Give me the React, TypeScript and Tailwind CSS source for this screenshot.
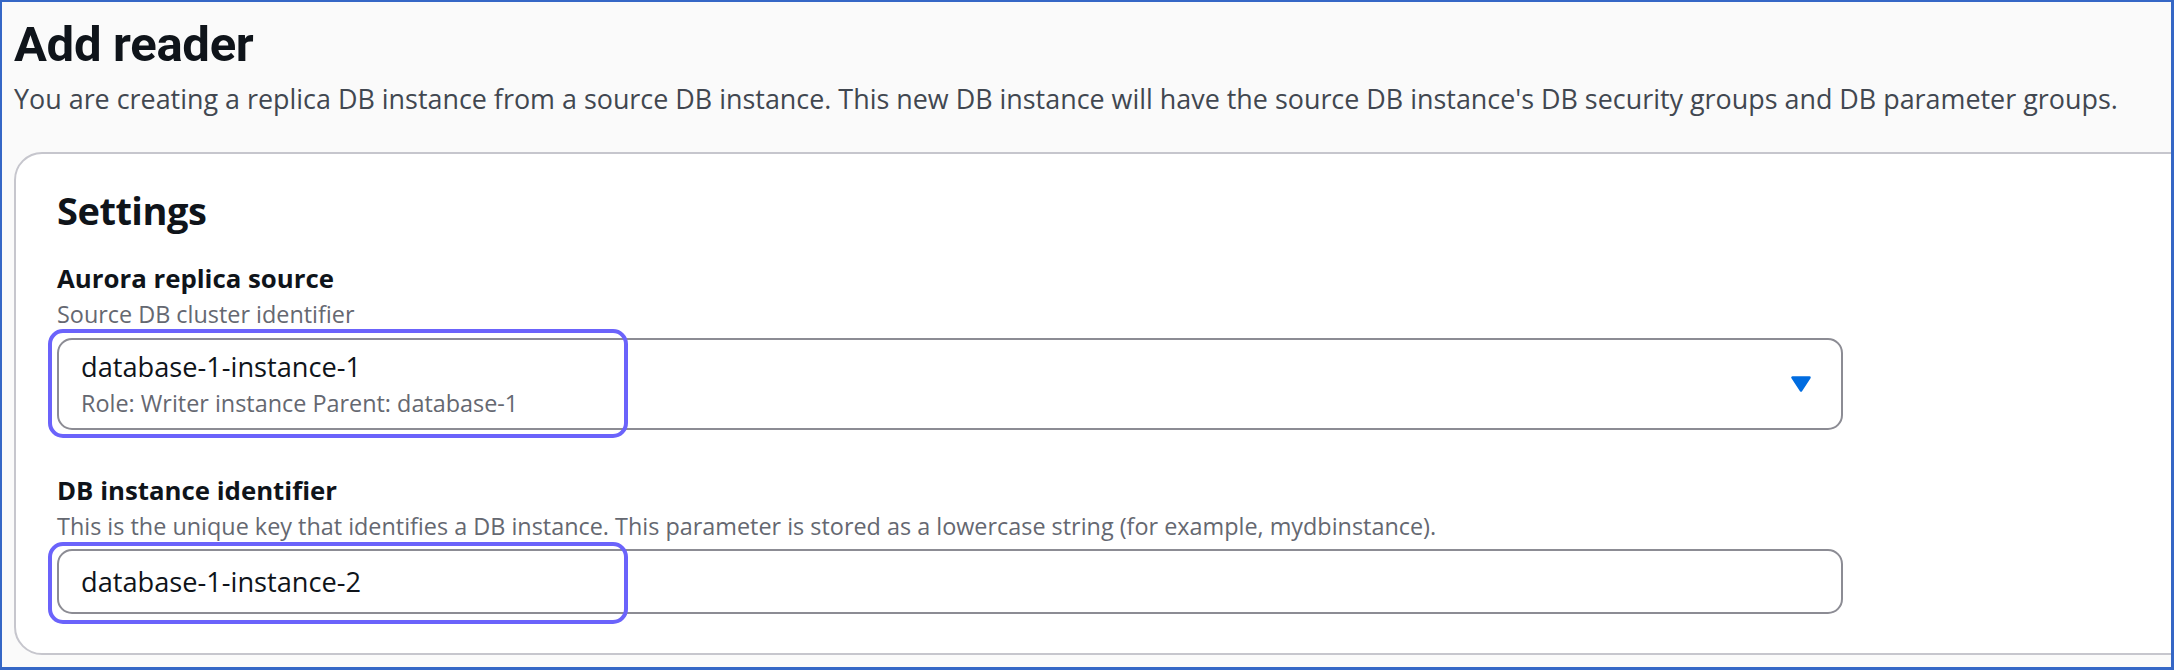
const body = "font-['Open_Sans',sans-serif]";

function CaretDown() {
  return (
    <svg width="20" height="16" viewBox="0 0 20 16" className="shrink-0">
      <polygon points="1.5,1.5 18.5,1.5 10,14.5" fill="#006ce0" stroke="#006ce0" strokeWidth="2.5" strokeLinejoin="round" />
    </svg>
  );
}

function Highlight({ className }: { className: string }) {
  return <div className={`pointer-events-none absolute rounded-[15px] border-[4.5px] border-[#6b63fb] ${className}`} />;
}

function FieldLabel({ label, description }: { label: string; description: string }) {
  return (
    <>
      <div className="text-[25.8px] font-bold leading-[34px] text-[#0f141a]">{label}</div>
      <div className="mt-1 whitespace-nowrap text-[23.4px] leading-[30px] text-[#656871]">{description}</div>
    </>
  );
}

export default function App() {
  return (
    <div
      className={`box-border h-[670px] w-[2174px] overflow-hidden border-t-2 border-l-2 border-r-[3px] border-b-[3px] border-[#3567c6] bg-[#fafafa] pl-3 pt-[14px] ${body}`}
    >
      <h1 className="font-['Roboto',sans-serif] text-[49px] font-bold leading-[58px] tracking-[-0.3px] text-[#0f141a]">
        Add reader
      </h1>
      <p className="mt-[7px] whitespace-nowrap text-[26.9px] leading-[36px] text-[#414750]">
        You are creating a replica DB instance from a source DB instance. This new DB instance will have the source DB
        instance's DB security groups and DB parameter groups.
      </p>

      <section className="-mr-[80px] mt-[35px] rounded-[28px] border-2 border-[#c6c6cd] bg-white pb-[39px] pl-[41px] pt-[33px]">
        <h2 className="text-[38px] font-bold leading-[46px] tracking-[-0.5px] text-[#0f141a]">Settings</h2>

        <div className="mt-[28px]">
          <FieldLabel label="Aurora replica source" description="Source DB cluster identifier" />
          <div className="relative mt-[9px] w-[1786px]">
            <div className="flex h-[92px] items-center justify-between rounded-[15px] border-2 border-[#8c8c94] bg-white pl-[22px] pr-[30px]">
              <div>
                <div className="text-[27.2px] leading-[34px] text-[#0f141a]">database-1-instance-1</div>
                <div className="mt-1 text-[23.4px] leading-[30px] text-[#656871]">Role: Writer instance Parent: database-1</div>
              </div>
              <CaretDown />
            </div>
            <Highlight className="-left-[9px] -top-[9px] h-[109px] w-[580px]" />
          </div>
        </div>

        <div className="mt-[43px]">
          <FieldLabel
            label="DB instance identifier"
            description="This is the unique key that identifies a DB instance. This parameter is stored as a lowercase string (for example, mydbinstance)."
          />
          <div className="relative mt-2 w-[1786px]">
            <div className="flex h-[65px] items-center rounded-[15px] border-2 border-[#8c8c94] bg-white pl-[22px]">
              <span className="text-[27.2px] leading-[34px] text-[#0f141a]">database-1-instance-2</span>
            </div>
            <Highlight className="-left-[9px] -top-[7px] h-[82px] w-[580px]" />
          </div>
        </div>
      </section>
    </div>
  );
}
